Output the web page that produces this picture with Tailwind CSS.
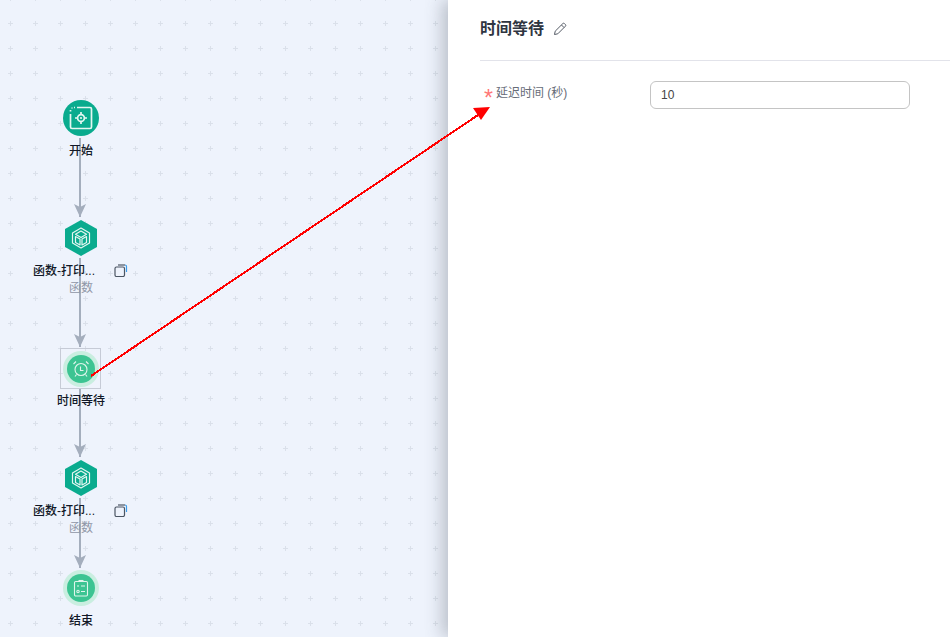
<!DOCTYPE html>
<html lang="zh">
<head>
  <meta charset="UTF-8" />
  <title>时间等待</title>
  <script src="https://cdn.jsdelivr.net/npm/@tailwindcss/browser@4"></script>
</head>
<body class="m-0 overflow-hidden bg-white font-['Liberation_Sans','Noto_Sans_CJK_SC',sans-serif]">
  <div class="relative flex h-[637px] w-[950px] overflow-hidden">

    <!-- canvas -->
    <div class="relative h-full w-[448px] shrink-0 bg-[#eef3fc]">
      <svg class="absolute inset-0" width="448" height="637">
        <defs>
          <pattern id="plus" x="5" y="18" width="25" height="25" patternUnits="userSpaceOnUse">
            <path d="M5.5 3V8M3 5.5H8" stroke="#dae0ea" stroke-width="1" fill="none"/>
          </pattern>
          <marker id="head" markerWidth="14" markerHeight="12" refX="13" refY="6" orient="auto" markerUnits="userSpaceOnUse">
            <path d="M0 0L13 6L0 12L3 6Z" fill="#a4aebd"/>
          </marker>
        </defs>
        <rect width="448" height="637" fill="url(#plus)"/>
        <!-- edges -->
        <g stroke="#a4aebd" stroke-width="2" fill="none">
          <path d="M80 138V217" marker-end="url(#head)"/>
          <path d="M80 258V347" marker-end="url(#head)"/>
          <path d="M80 389V457" marker-end="url(#head)"/>
          <path d="M80 498V568" marker-end="url(#head)"/>
        </g>
      </svg>

      <!-- 开始 -->
      <div class="absolute left-[41px] top-[100px] flex w-[80px] flex-col items-center">
        <div class="flex h-9 w-9 items-center justify-center rounded-full bg-[#0aab8e]">
          <svg width="24" height="24" viewBox="0 0 24 24" fill="none" stroke="#e4f6f1" stroke-width="1.7">
            <path d="M8 1.5H21a1.5 1.5 0 0 1 1.5 1.5V21a1.5 1.5 0 0 1-1.5 1.5H3A1.5 1.5 0 0 1 1.5 21V8"/>
            <path d="M1.5 5.5V4M2.5 2H3.5M5 1.5H6" />
            <circle cx="12" cy="12" r="3.4"/>
            <circle cx="12" cy="12" r="1.1" fill="#e4f6f1" stroke="none"/>
            <path d="M12 6V8.5M12 15.5V18M6 12H8.5M15.5 12H18"/>
          </svg>
        </div>
        <span class="mt-[6px] text-xs leading-[18px] font-medium text-[#111827]">开始</span>
      </div>

      <!-- 函数 1 -->
      <div class="absolute left-[65px] top-[220px]">
        <svg width="32" height="36" viewBox="0 0 32 36">
          <path d="M16 0L32 9V27L16 36L0 27V9Z" fill="#0aab8e"/>
          <g fill="none" stroke="#e4f6f1" stroke-width="1.2" stroke-linejoin="round">
            <path d="M16 8L24.5 13V23L16 28L7.5 23V13Z"/>
            <path d="M16 11L21.5 14.3L16 17.5L10.5 14.3Z"/>
            <path d="M10.5 16.5L15 19V25L10.5 22.5Z"/>
            <path d="M21.5 16.5L17 19V25L21.5 22.5Z"/>
          </g>
        </svg>
      </div>
      <span class="absolute left-[33px] top-[262px] text-xs leading-[18px] font-medium text-[#111827]">函数-打印...</span>
      <svg class="absolute left-[114px] top-[264px]" width="14" height="13" viewBox="0 0 14 13" fill="none">
        <rect x="1" y="3" width="9.5" height="9.5" rx="1.5" stroke="#4b5563" stroke-width="1.2"/>
        <path d="M4 1H11" stroke="#4b5563" stroke-width="1.2"/>
        <path d="M11 1a1.5 1.5 0 0 1 1.5 1.5V8" stroke="#3b9be8" stroke-width="1.2"/>
      </svg>
      <span class="absolute left-[69px] top-[279px] text-xs leading-[18px] text-[#8f96a6]">函数</span>

      <!-- 时间等待 -->
      <div class="absolute left-[60px] top-[348px] flex h-[41px] w-[41px] items-center justify-center border border-[#c6cbd6]">
        <div class="flex h-9 w-9 items-center justify-center rounded-full bg-[#c9eee0]">
          <div class="flex h-7 w-7 items-center justify-center rounded-full bg-[#3cc492]">
            <svg width="18" height="18" viewBox="0 0 18 18" fill="none" stroke="#dff5ec" stroke-width="1.1">
              <circle cx="9" cy="9.5" r="6"/>
              <path d="M8.5 6.5V10.5H11.5"/>
              <path d="M1.5 4L4 1.5M16.5 4L14 1.5M4.5 14.5L3 16.5M13.5 14.5L15 16.5"/>
            </svg>
          </div>
        </div>
      </div>
      <span class="absolute left-[57px] top-[392px] text-xs leading-[18px] font-medium text-[#111827]">时间等待</span>

      <!-- 函数 2 -->
      <div class="absolute left-[65px] top-[460px]">
        <svg width="32" height="36" viewBox="0 0 32 36">
          <path d="M16 0L32 9V27L16 36L0 27V9Z" fill="#0aab8e"/>
          <g fill="none" stroke="#e4f6f1" stroke-width="1.2" stroke-linejoin="round">
            <path d="M16 8L24.5 13V23L16 28L7.5 23V13Z"/>
            <path d="M16 11L21.5 14.3L16 17.5L10.5 14.3Z"/>
            <path d="M10.5 16.5L15 19V25L10.5 22.5Z"/>
            <path d="M21.5 16.5L17 19V25L21.5 22.5Z"/>
          </g>
        </svg>
      </div>
      <span class="absolute left-[33px] top-[502px] text-xs leading-[18px] font-medium text-[#111827]">函数-打印...</span>
      <svg class="absolute left-[114px] top-[504px]" width="14" height="13" viewBox="0 0 14 13" fill="none">
        <rect x="1" y="3" width="9.5" height="9.5" rx="1.5" stroke="#4b5563" stroke-width="1.2"/>
        <path d="M4 1H11" stroke="#4b5563" stroke-width="1.2"/>
        <path d="M11 1a1.5 1.5 0 0 1 1.5 1.5V8" stroke="#3b9be8" stroke-width="1.2"/>
      </svg>
      <span class="absolute left-[69px] top-[519px] text-xs leading-[18px] text-[#8f96a6]">函数</span>

      <!-- 结束 -->
      <div class="absolute left-[63px] top-[570px] flex h-9 w-9 items-center justify-center rounded-full bg-[#c9eee0]">
        <div class="flex h-7 w-7 items-center justify-center rounded-full bg-[#3cc492]">
          <svg width="16" height="18" viewBox="0 0 16 18" fill="none" stroke="#dff5ec" stroke-width="1.1">
            <rect x="1.5" y="2.5" width="13" height="14.5" rx="1.2"/>
            <path d="M5.5 1.5H10.5"/>
            <path d="M4 7H6M8 7H12M8 12.5H12"/>
            <circle cx="5" cy="12.5" r="1.2"/>
          </svg>
        </div>
      </div>
      <span class="absolute left-[69px] top-[612px] text-xs leading-[18px] font-medium text-[#111827]">结束</span>
    </div>

    <!-- config panel -->
    <div class="relative flex-1 bg-white shadow-[-6px_0_16px_rgba(70,75,90,0.3)]">
      <div class="flex h-[60px] items-center gap-[9px] pb-[2px] pl-[32px]">
        <h2 class="text-base leading-6 font-bold text-[#2f3541]">时间等待</h2>
        <svg width="14" height="14" viewBox="0 0 14 14" fill="none" stroke="#555b66" stroke-width="1">
          <path d="M1.5 12.5L2.2 9.2L9.8 1.6a1.2 1.2 0 0 1 1.7 0L12.4 2.5a1.2 1.2 0 0 1 0 1.7L4.8 11.8Z"/>
          <path d="M8.5 3L11 5.5"/>
        </svg>
      </div>
      <div class="ml-[32px] h-px bg-[#e2e3ea]"></div>
      <div class="mt-5 flex items-start pl-[36px]">
        <div class="flex w-[166px] shrink-0 items-start">
          <span class="mt-[7px] w-3 text-[23px] leading-5 text-[#f77]">*</span>
          <span class="text-xs leading-6 text-[#666c78]">延迟时间 (秒)</span>
        </div>
        <input value="10" class="h-[28px] w-[260px] rounded-md border border-[#c4c4c4] bg-white px-[10px] text-xs text-[#444]" />
      </div>
    </div>

    <!-- red annotation arrow -->
    <svg class="pointer-events-none absolute inset-0" width="950" height="637">
      <path d="M91 376L478 115" stroke="#f00" stroke-width="2" fill="none" shape-rendering="crispEdges"/>
      <path d="M490 107L481 120L473 108Z" fill="#f00"/>
    </svg>
  </div>
</body>
</html>
